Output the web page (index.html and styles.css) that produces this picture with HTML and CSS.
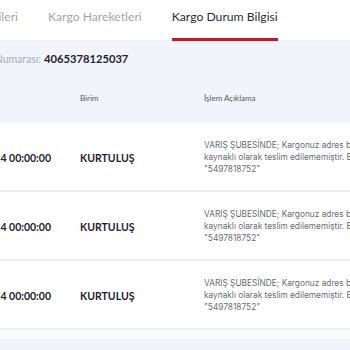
FILE: index.html
```html
<!DOCTYPE html>
<html lang="tr">
<head>
<meta charset="utf-8">
<title>Kargo Durum Bilgisi</title>
<link rel="stylesheet" href="styles.css">
</head>
<body>
<div class="page">
  <nav class="tabs">
    <div class="tab tab-cut"><span>Kargo Bilgileri</span></div>
    <div class="tab">Kargo Hareketleri</div>
    <div class="tab active">Kargo Durum Bilgisi</div>
  </nav>
  <main class="content">
    <div class="tracking">
      <div class="tracking-label"><span>Takip Numarası:</span></div>
      <div class="tracking-no">4065378125037</div>
    </div>
    <div class="table">
      <div class="thead">
        <div class="cell-date"></div>
        <div class="th">Birim</div>
        <div class="th">İşlem Açıklama</div>
      </div>
      <div class="row">
        <div class="cell-date"><span>14.03.2024 00:00:00</span></div>
        <div class="unit">KURTULUŞ</div>
        <div class="desc">VARIŞ ŞUBESİNDE; Kargonuz adres bilgisinin eksik<br>kaynaklı olarak teslim edilememiştir. Bilgi için<br>"5497818752"</div>
      </div>
      <div class="row">
        <div class="cell-date"><span>13.03.2024 00:00:00</span></div>
        <div class="unit">KURTULUŞ</div>
        <div class="desc">VARIŞ ŞUBESİNDE; Kargonuz adres bilgisinin eksik<br>kaynaklı olarak teslim edilememiştir. Bilgi için<br>"5497818752"</div>
      </div>
      <div class="row">
        <div class="cell-date"><span>12.03.2024 00:00:00</span></div>
        <div class="unit">KURTULUŞ</div>
        <div class="desc">VARIŞ ŞUBESİNDE; Kargonuz adres bilgisinin eksik<br>kaynaklı olarak teslim edilememiştir. Bilgi için<br>"5497818752"</div>
      </div>
      <div class="table-end"></div>
    </div>
  </main>
</div>
</body>
</html>
```
FILE: styles.css
```css
html, body {
  margin: 0;
  padding: 0;
  background: #f1f4fa;
  overflow: hidden;
}
body {
  font-family: Lato, "Noto Sans", sans-serif;
  width: 350px;
  height: 350px;
}
.page {
  width: 350px;
}
.tabs {
  display: flex;
  gap: 30px;
  background: #ffffff;
  height: 41px;
  box-sizing: border-box;
  border-bottom: 1px solid #eceff5;
}
.tab {
  font-size: 12.2px;
  line-height: 16px;
  padding-top: 9px;
  color: #a3a6ad;
  white-space: nowrap;
  box-sizing: border-box;
  height: 41px;
}
.tab-cut {
  width: 18px;
  flex: 0 0 18px;
  display: flex;
  justify-content: flex-end;
}
.tab.active {
  color: #2a2e38;
  border-bottom: 3px solid #c5182b;
  height: 41px;
}
.content {
  background: #f1f4fa;
}
.tracking {
  display: flex;
  align-items: baseline;
  gap: 3px;
  padding-top: 11px;
  height: 32px;
  box-sizing: border-box;
}
.tracking-label {
  width: 41px;
  flex: 0 0 41px;
  display: flex;
  justify-content: flex-end;
  white-space: nowrap;
  font-size: 10.5px;
  color: #a9acb4;
}
.tracking-no {
  font-weight: 700;
  color: #1f2330;
  font-size: 11.2px;
}
.thead, .row {
  display: grid;
  grid-template-columns: 51px 95px 1fr;
  column-gap: 29px;
  align-items: center;
}
.thead {
  height: 50px;
}
.th {
  font-size: 8px;
  color: #55585f;
}
.cell-date {
  display: flex;
  justify-content: flex-end;
  white-space: nowrap;
  font-size: 10.5px;
  font-weight: 700;
  color: #1f2330;
  padding-top: 2px;
}
.row {
  background: #ffffff;
  height: 69px;
  box-sizing: border-box;
  border-bottom: 2px solid #eeeff1;
}
.unit {
  font-size: 10.5px;
  font-weight: 700;
  color: #1f2330;
  padding-top: 2px;
}
.desc {
  font-family: Inter, "Noto Sans", sans-serif;
  font-size: 8.3px;
  line-height: 12px;
  color: #6a6d74;
  white-space: nowrap;
}
.table-end {
  height: 9px;
  background: #fbfdfd;
  border-bottom: 1px solid #eceff5;
}
```
